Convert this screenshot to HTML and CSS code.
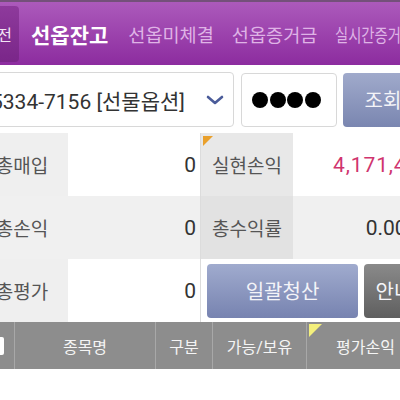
FILE: index.html
```html
<!DOCTYPE html>
<html lang="ko">
<head>
    <meta charset="UTF-8">
    <meta name="viewport" content="width=device-width, initial-scale=1.0">
    <title>선옵잔고</title>
    <link rel="stylesheet" href="styles.css">
</head>
<body>
    <div class="topbar">
        <div class="tab tab-prev">이전</div>
        <div class="tab tab-active">선옵잔고</div>
        <div class="tab">선옵미체결</div>
        <div class="tab">선옵증거금</div>
        <div class="tab"><span class="tab-narrow">실시간증거금</span></div>
    </div>

    <div class="query">
        <div class="account">
            <span class="account-no">5334-7156 [선물옵션]</span>
            <svg class="chevron" width="18" height="10" viewBox="0 0 18 10">
                <polyline points="2,2 9,8 16,2" fill="none" stroke="#4b5c9a" stroke-width="2.6" stroke-linecap="round" stroke-linejoin="round"/>
            </svg>
        </div>
        <div class="password">
            <span class="dot"></span><span class="dot"></span><span class="dot"></span><span class="dot"></span>
        </div>
        <button class="btn btn-search">조회</button>
    </div>

    <div class="summary">
        <div class="cell label">총매입</div>
        <div class="cell value">0</div>
        <div class="cell label label-right marked">실현손익</div>
        <div class="cell value profit">4,171,400</div>

        <div class="cell label shade">총손익</div>
        <div class="cell value shade">0</div>
        <div class="cell label label-right shade-dark">총수익률</div>
        <div class="cell value shade">0.00%</div>

        <div class="cell label">총평가</div>
        <div class="cell value">0</div>
        <div class="cell actions">
            <button class="btn btn-clear">일괄청산</button>
            <button class="btn btn-info">안내</button>
        </div>
    </div>

    <div class="grid-head">
        <div class="col col-check"><span class="checkbox"></span></div>
        <div class="col col-name">종목명</div>
        <div class="col col-type">구분</div>
        <div class="col col-qty">가능/보유</div>
        <div class="col col-pl">평가손익</div>
    </div>
</body>
</html>
```

FILE: styles.css
```css
body {
    margin: 0;
    width: 400px;
    height: 400px;
    overflow: hidden;
    background-color: #fff;
    font-family: Roboto, "Noto Sans CJK KR", sans-serif;
    color: #333;
}

/* top tab bar */
.topbar {
    display: flex;
    align-items: center;
    height: 63px;
    border-top: 2px solid #74507a;
    background: linear-gradient(to bottom, #ac5abb, #8c2c9f);
    white-space: nowrap;
}

.tab {
    flex-shrink: 0;
    font-size: 18.6px;
    color: #dfb3e6;
    margin-right: 18px;
}

.tab-prev {
    display: flex;
    align-items: center;
    justify-content: flex-end;
    width: 50px;
    height: 56px;
    margin-left: -31px;
    margin-right: 12px;
    padding-right: 7px;
    box-sizing: border-box;
    border-radius: 4px;
    background: linear-gradient(to bottom, #8e3a9c, #7a2689);
    color: #f2e4f4;
    font-size: 16px;
    overflow: hidden;
}

.tab-active {
    font-size: 21px;
    font-weight: bold;
    color: #fff;
    margin-right: 20px;
}

.tab-narrow {
    display: inline-block;
    transform: scaleX(0.77);
    transform-origin: 0 50%;
}

/* account / password row */
.query {
    display: flex;
    align-items: center;
    margin-top: 7px;
    height: 55px;
    white-space: nowrap;
}

.account {
    flex-shrink: 0;
    display: flex;
    align-items: center;
    justify-content: space-between;
    width: 240px;
    height: 55px;
    margin-left: -6px;
    padding: 0 9px 0 0;
    box-sizing: border-box;
    border: 1px solid #d8d8d8;
    border-radius: 4px;
    overflow: hidden;
}

.account-no {
    font-size: 21px;
    color: #333;
    margin-left: -4px;
}

.password {
    flex-shrink: 0;
    display: flex;
    align-items: center;
    gap: 1.5px;
    width: 96px;
    height: 54px;
    margin-left: 7px;
    padding-left: 10px;
    box-sizing: border-box;
    border: 1px solid #d8d8d8;
    border-radius: 4px;
}

.dot {
    width: 16px;
    height: 16px;
    border-radius: 50%;
    background-color: #000;
}

.btn {
    flex-shrink: 0;
    border: none;
    border-radius: 4px;
    color: #f4f4f8;
    font-family: Roboto, "Noto Sans CJK KR", sans-serif;
    font-size: 20px;
    padding: 0;
}

.btn-search {
    width: 80px;
    height: 54px;
    margin-left: 6px;
    background: linear-gradient(to bottom, #a0aacb, #7a86b0);
}

/* summary table */
.summary {
    display: grid;
    grid-template-columns: 92px 132px 93px 133px;
    grid-auto-rows: 63px;
    margin-top: 6px;
    margin-left: -24px;
}

.cell {
    display: flex;
    align-items: center;
    font-size: 19px;
}

.label {
    justify-content: center;
    background-color: #efefef;
    color: #555;
}

.label-right {
    border-left: 1px solid #dcdcdc;
    background-color: #e8e8e8;
}

.value {
    justify-content: flex-end;
    padding-right: 4px;
    background-color: #fff;
    font-size: 21px;
}

.shade {
    background-color: #f0f0f0;
}

.shade-dark {
    background-color: #e2e2e2;
}

.profit {
    justify-content: flex-start;
    padding-left: 40px;
    letter-spacing: 0.9px;
    color: #d0346e;
    white-space: nowrap;
}

.marked {
    position: relative;
}

.marked::before {
    content: "";
    position: absolute;
    left: 2px;
    top: 3px;
    border-top: 10px solid #e9a02c;
    border-right: 10px solid transparent;
}

.actions {
    grid-column: span 2;
    gap: 6px;
    padding-left: 6px;
    border-left: 1px solid #dcdcdc;
}

.btn-clear {
    width: 151px;
    height: 54px;
    background: linear-gradient(to bottom, #a0abce, #7783b0);
}

.btn-info {
    width: 60px;
    height: 54px;
    background: linear-gradient(to bottom, #8a8a8a, #5f5f5f);
}

/* list header */
.grid-head {
    display: flex;
    height: 47px;
    background-color: #8d8d8d;
    color: #f5f5f5;
    font-size: 16px;
    white-space: nowrap;
}

.col {
    flex-shrink: 0;
    display: flex;
    align-items: center;
    justify-content: center;
    border-right: 1px solid #a8a8a8;
}

.col-check {
    width: 44px;
    margin-left: -30px;
}

.checkbox {
    width: 18px;
    height: 18px;
    border-radius: 2px;
    background-color: #fff;
    margin-left: 6px;
}

.col-name {
    width: 140px;
}

.col-type {
    width: 56px;
}

.col-qty {
    width: 93px;
}

.col-pl {
    position: relative;
    width: 117px;
    border-right: none;
}

.col-pl::before {
    content: "";
    position: absolute;
    left: 2px;
    top: 2px;
    border-top: 13px solid #f3ef7c;
    border-right: 13px solid transparent;
}
```
